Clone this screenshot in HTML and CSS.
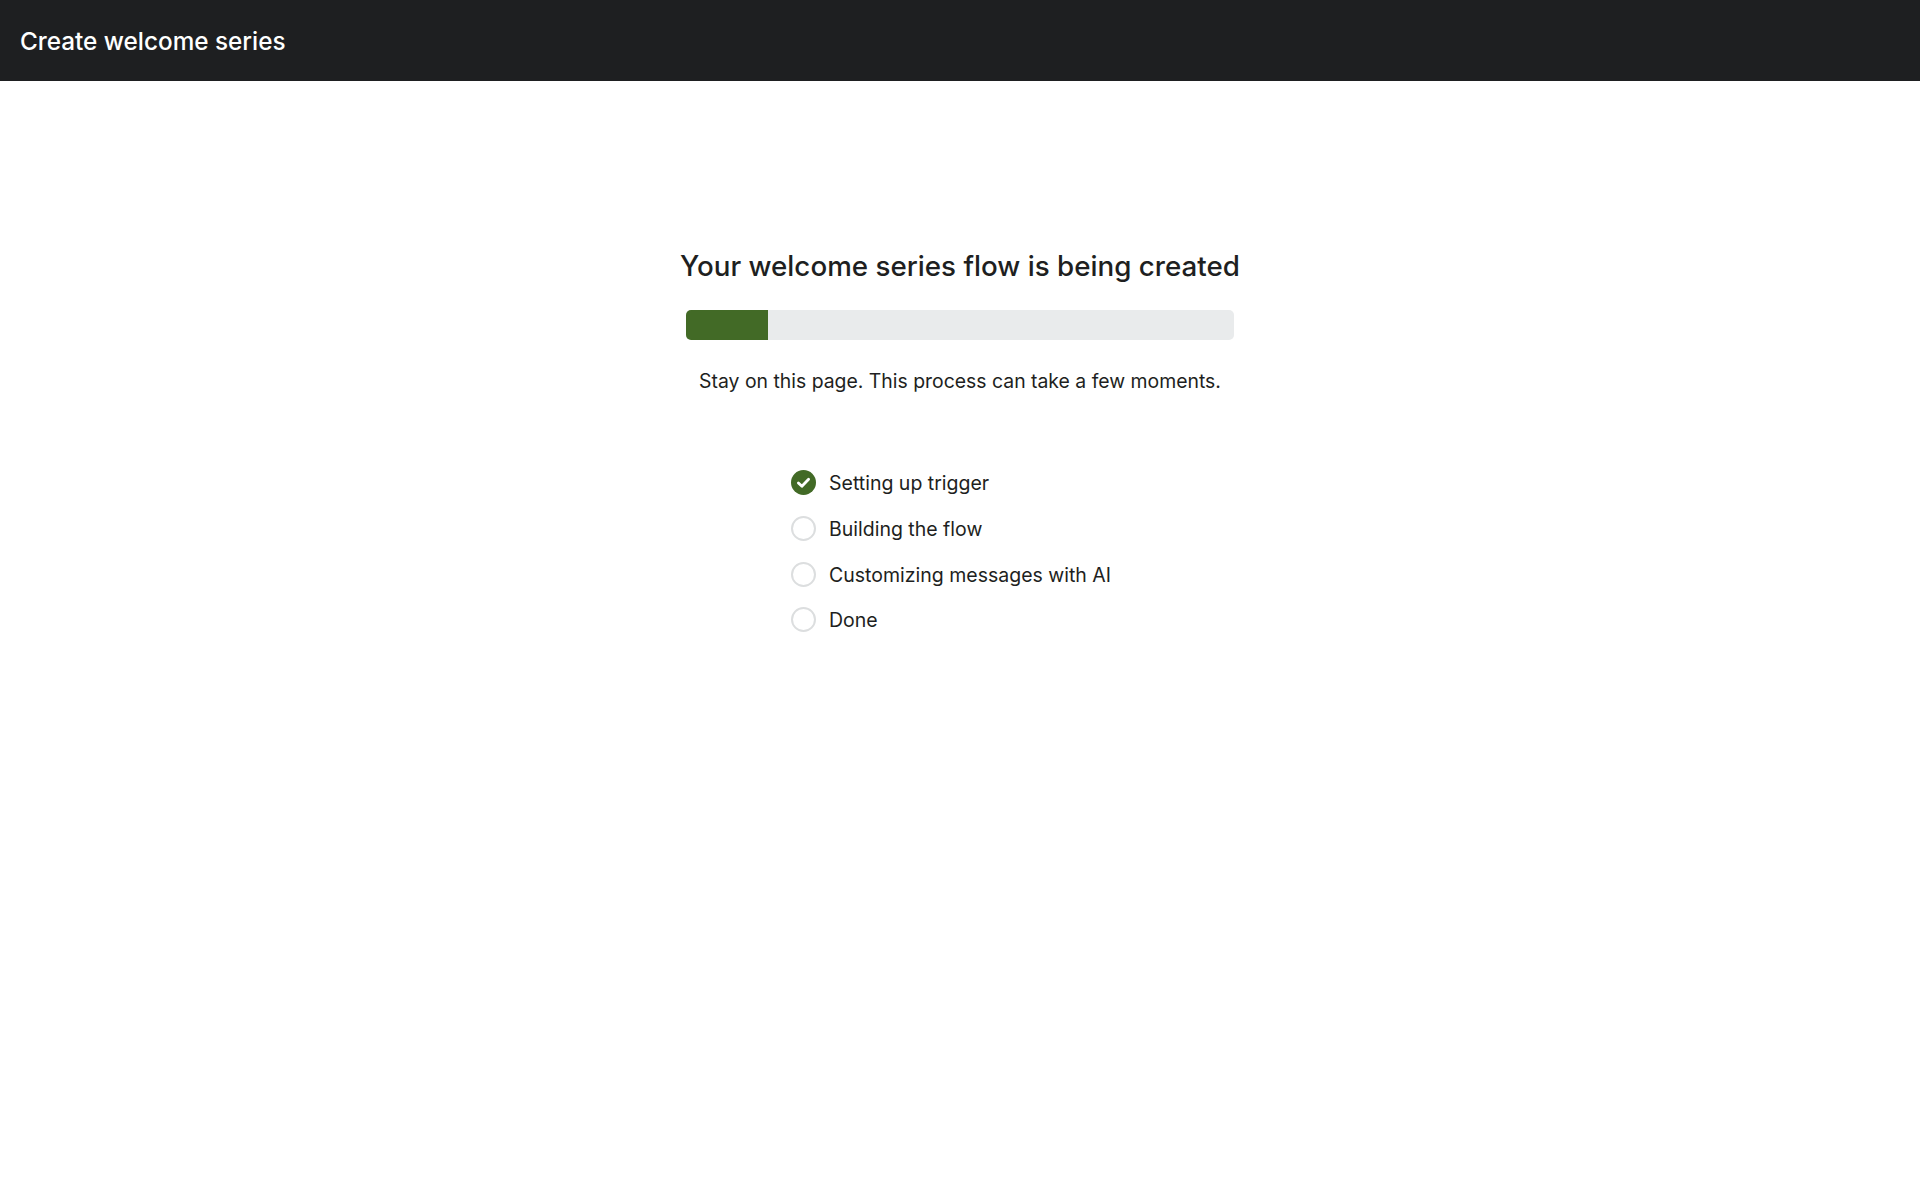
FILE: index.html
```html
<!DOCTYPE html>
<html lang="en">
<head>
  <meta charset="UTF-8">
  <title>Create welcome series</title>
  <link rel="stylesheet" href="styles.css">
</head>
<body>

  <header class="top-bar">
    <h1>Create welcome series</h1>
  </header>

  <main class="progress-page">
    <h2>Your welcome series flow is being created</h2>

    <div class="progress-track">
      <div class="progress-fill" style="width: 15%"></div>
    </div>

    <p class="progress-note">Stay on this page. This process can take a few moments.</p>

    <ul class="step-list">
      <li class="step">
        <svg class="step-icon" viewBox="0 0 25 25" aria-hidden="true">
          <circle cx="12.5" cy="12.5" r="12.5" fill="#426a26"/>
          <path d="M7.4 13l3.5 3.3 6.7-7" fill="none" stroke="#fff" stroke-width="2.8" stroke-linecap="round" stroke-linejoin="round"/>
        </svg>
        Setting up trigger
      </li>
      <li class="step"><span class="step-ring"></span>Building the flow</li>
      <li class="step"><span class="step-ring"></span>Customizing messages with AI</li>
      <li class="step"><span class="step-ring"></span>Done</li>
    </ul>
  </main>

</body>
</html>
```

FILE: styles.css
```css
body {
  margin: 0;
  min-height: 1200px;
  background-color: #ffffff;
  color: #1e1f21;
  font-family: Inter, "Liberation Sans", sans-serif;
}

.top-bar {
  height: 81px;
  background-color: #1e1f21;
  display: flex;
  align-items: center;
  padding: 1px 20px 0;
  box-sizing: border-box;
}

.top-bar h1 {
  margin: 0;
  color: #ffffff;
  font-size: 24.3px;
  font-weight: 500;
}

.progress-page {
  display: flex;
  flex-direction: column;
  align-items: center;
  padding-top: 165px;
}

.progress-page h2 {
  margin: 0;
  height: 40px;
  line-height: 40px;
  font-size: 27.75px;
  font-weight: 500;
}

.progress-track {
  width: 548px;
  height: 30px;
  margin-top: 24px;
  background-color: #e9ebec;
  border-radius: 5px;
  overflow: hidden;
}

.progress-fill {
  height: 100%;
  background-color: #426a26;
}

.progress-note {
  margin: 27px 0 0;
  font-size: 19.4px;
  line-height: 28px;
}

.step-list {
  list-style: none;
  margin: 73px 0 0;
  padding: 0;
  width: 338px;
  display: flex;
  flex-direction: column;
  gap: 15.8px;
}

.step {
  display: flex;
  align-items: center;
  gap: 13px;
  height: 30px;
  font-size: 19.5px;
}

.step-icon, .step-ring {
  width: 25px;
  height: 25px;
  flex-shrink: 0;
  margin-top: -1px;
}

.step-ring {
  box-sizing: border-box;
  border: 2.5px solid #dcdedf;
  border-radius: 50%;
}
```
